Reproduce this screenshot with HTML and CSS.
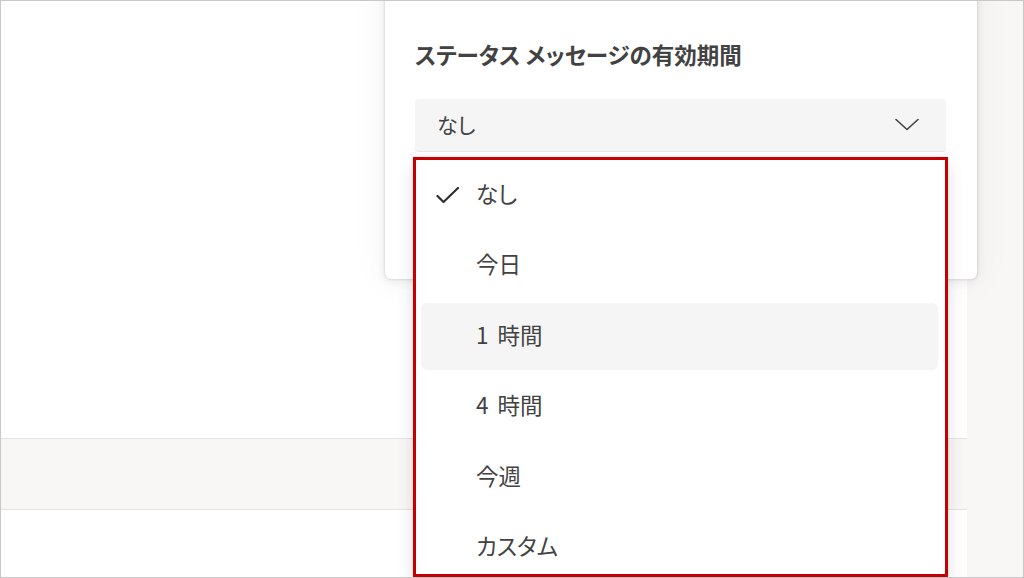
FILE: index.html
```html
<!DOCTYPE html>
<html lang="ja">
<head>
    <meta charset="UTF-8">
    <meta name="viewport" content="width=device-width, initial-scale=1.0">
    <title>ステータス メッセージの有効期間</title>
    <link rel="stylesheet" href="styles.css">
</head>
<body>
    <div class="frame">
        <div class="main">
            <div class="main-top"></div>
            <div class="bar"></div>
            <div class="main-bottom"></div>
        </div>
        <div class="side"></div>

        <div class="card">
            <h2 class="card-title">ステータス メッセージの有効期間</h2>
            <div class="select">
                <span class="select-value">なし</span>
                <svg class="chevron" width="24" height="13" viewBox="0 0 24 13">
                    <path d="M1 1.5 L12 11.5 L23 1.5" fill="none" stroke="#424242" stroke-width="1.6" stroke-linecap="round" stroke-linejoin="round"/>
                </svg>

                <ul class="options">
                    <li class="option">
                        <svg class="check" width="24" height="17" viewBox="0 0 24 17">
                            <path d="M1.5 9 L7.5 15 L22 1" fill="none" stroke="#303030" stroke-width="2.2" stroke-linecap="round" stroke-linejoin="round"/>
                        </svg>
                        <span>なし</span>
                    </li>
                    <li class="option"><span class="check"></span><span>今日</span></li>
                    <li class="option hover"><span class="check"></span><span>1 時間</span></li>
                    <li class="option"><span class="check"></span><span>4 時間</span></li>
                    <li class="option"><span class="check"></span><span>今週</span></li>
                    <li class="option"><span class="check"></span><span>カスタム</span></li>
                </ul>
            </div>
        </div>
    </div>
</body>
</html>
```

FILE: styles.css
```css
* {
    box-sizing: border-box;
}
body {
    margin: 0;
    font-family: "Noto Sans CJK JP", "Noto Sans", sans-serif;
    color: #424242;
    background: #fff;
}
.frame {
    position: relative;
    width: 1024px;
    height: 578px;
    border: 1px solid #c8c8c8;
    display: flex;
    overflow: hidden;
}
.main {
    flex: 1;
    display: flex;
    flex-direction: column;
    background: #fff;
}
.main-top {
    height: 437px;
}
.bar {
    height: 72px;
    background: #f8f7f6;
    border-top: 1px solid #e3e3e3;
    border-bottom: 1px solid #e3e3e3;
}
.main-bottom {
    flex: 1;
}
.side {
    width: 56px;
    background: #f8f7f6;
}
.card {
    position: absolute;
    left: 384px;
    top: -31px;
    width: 592px;
    height: 309px;
    background: #fff;
    border-radius: 6px;
    padding: 69px 31px 0 30px;
    box-shadow: 0 0 3px rgba(0, 0, 0, 0.18), 0 2px 12px rgba(0, 0, 0, 0.08), 0 0 36px 6px rgba(0, 0, 0, 0.03);
}
.card-title {
    margin: 0 0 30px 0;
    font-size: 22.5px;
    line-height: 30px;
    font-weight: 700;
    color: #424242;
    font-feature-settings: "palt";
}
.select {
    position: relative;
    height: 53px;
    background: #f5f5f5;
    border-radius: 4px;
    border-bottom: 1px solid #e8e8e8;
    display: flex;
    align-items: center;
    justify-content: space-between;
    padding: 0 27px 2px 22px;
}
.select-value {
    font-size: 21px;
    color: #424242;
    font-feature-settings: "palt";
}
.chevron {
    display: block;
}
.options {
    position: absolute;
    left: -2px;
    top: 58px;
    width: 535px;
    height: 420px;
    margin: 0;
    list-style: none;
    background: #fff;
    border: 3px solid #c40000;
    padding: 2px 7px 0 5px;
    display: flex;
    flex-direction: column;
    gap: 3.4px;
    box-shadow: 0 0 2px rgba(0, 0, 0, 0.12), 0 8px 16px rgba(0, 0, 0, 0.12);
}
.option {
    height: 67px;
    flex: none;
    display: flex;
    align-items: center;
    padding: 0 0 5px 15px;
    font-size: 22.5px;
    color: #424242;
    border-radius: 6px;
    font-feature-settings: "palt";
    word-spacing: 4px;
}
.option.hover {
    background: #f5f5f5;
}
.option svg.check {
    margin-top: 4px;
}
.check {
    display: block;
    width: 24px;
    margin-right: 16px;
    flex: none;
}
```
